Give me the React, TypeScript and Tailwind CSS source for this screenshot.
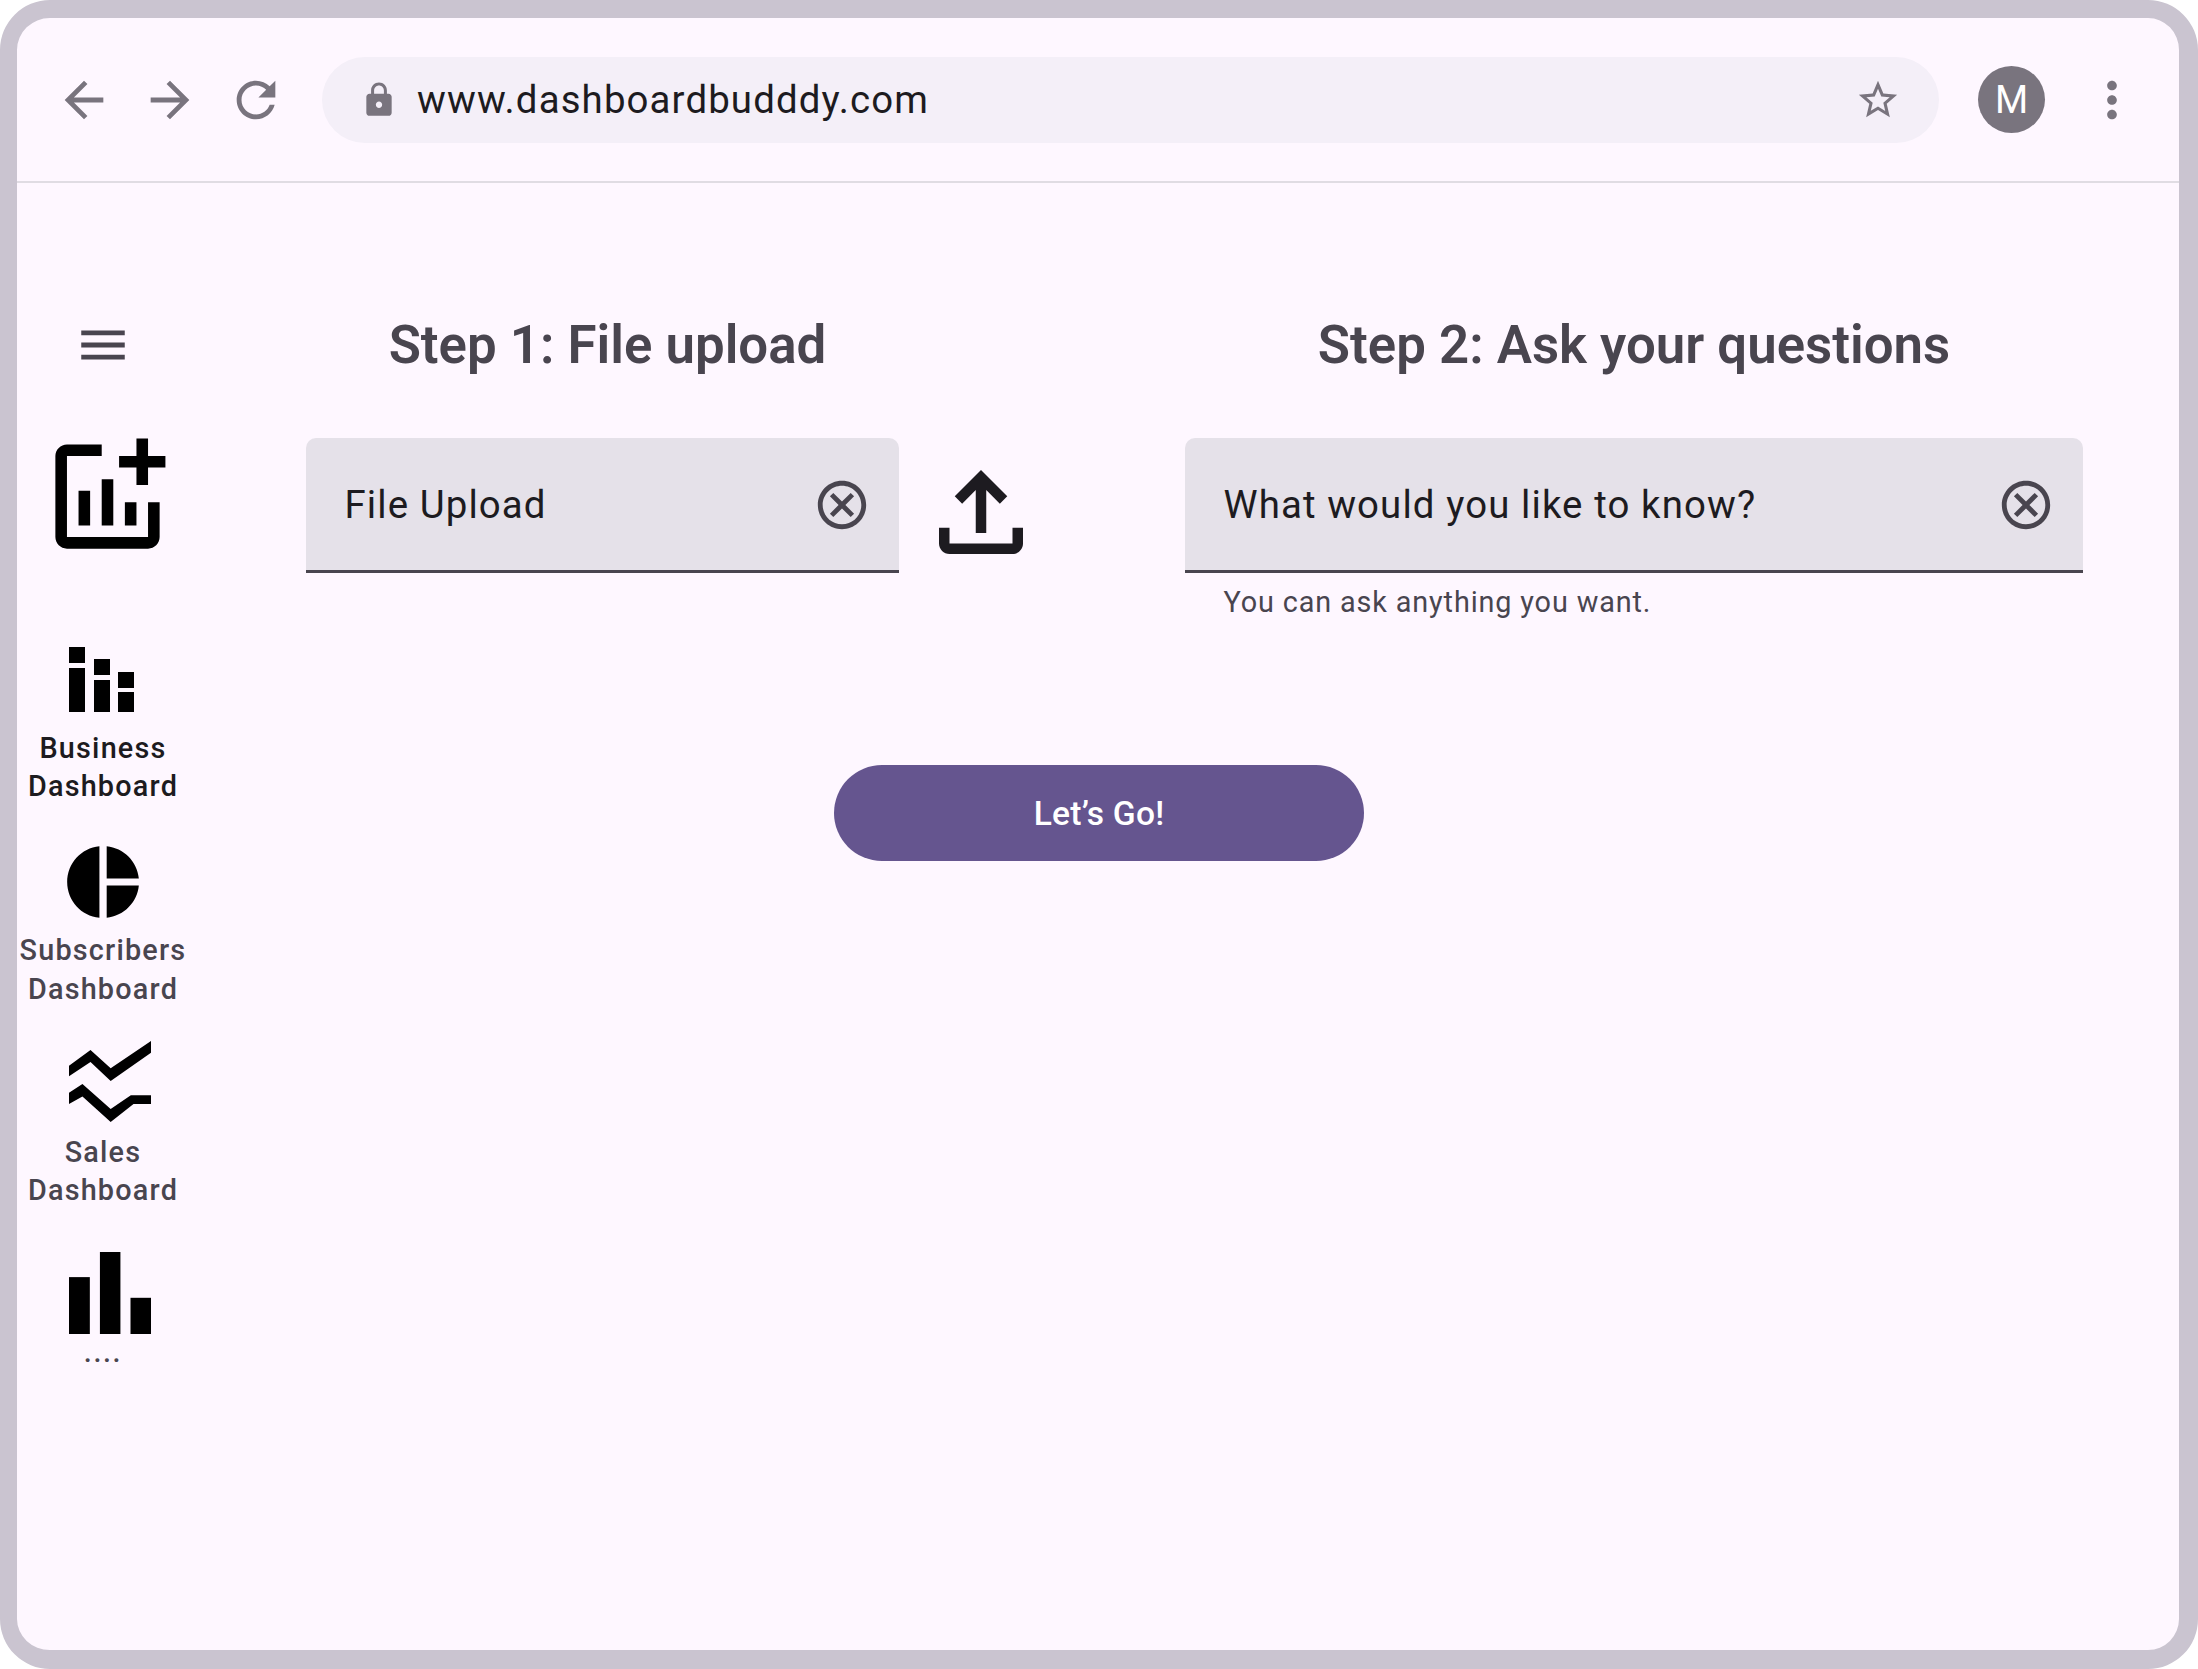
import React from "react";

const Icon = ({ d, size, className = "" }: { d: string; size: number; className?: string }) => (
  <svg viewBox="0 0 24 24" width={size} height={size} className={`shrink-0 fill-current ${className}`}>
    <path d={d} />
  </svg>
);

const P = {
  back: "M20 11H7.83l5.59-5.59L12 4l-8 8 8 8 1.41-1.41L7.83 13H20v-2z",
  forward: "M12 4l-1.41 1.41L16.17 11H4v2h12.17l-5.58 5.59L12 20l8-8z",
  reload: "M17.65 6.35C16.2 4.9 14.21 4 12 4c-4.42 0-7.99 3.58-7.99 8s3.57 8 7.99 8c3.73 0 6.84-2.55 7.73-6h-2.08c-.82 2.33-3.04 4-5.65 4-3.31 0-6-2.69-6-6s2.69-6 6-6c1.66 0 3.14.69 4.22 1.78L13 11h7V4l-2.35 2.35z",
  lock: "M18 8h-1V6c0-2.76-2.24-5-5-5S7 3.24 7 6v2H6c-1.1 0-2 .9-2 2v10c0 1.1.9 2 2 2h12c1.1 0 2-.9 2-2V10c0-1.1-.9-2-2-2zm-6 9c-1.1 0-2-.9-2-2s.9-2 2-2 2 .9 2 2-.9 2-2 2zm3.1-9H8.9V6c0-1.71 1.39-3.1 3.1-3.1 1.71 0 3.1 1.39 3.1 3.1v2z",
  star: "M22 9.24l-7.19-.62L12 2 9.19 8.63 2 9.24l5.46 4.73L5.82 21 12 17.27 18.18 21l-1.63-7.03L22 9.24zM12 15.4l-3.76 2.27 1-4.28-3.32-2.88 4.38-.38L12 6.1l1.71 4.04 4.38.38-3.32 2.88 1 4.28L12 15.4z",
  more: "M12 8c1.1 0 2-.9 2-2s-.9-2-2-2-2 .9-2 2 .9 2 2 2zm0 2c-1.1 0-2 .9-2 2s.9 2 2 2 2-.9 2-2-.9-2-2-2zm0 6c-1.1 0-2 .9-2 2s.9 2 2 2 2-.9 2-2-.9-2-2-2z",
  menu: "M3 18h18v-2H3v2zm0-5h18v-2H3v2zm0-7v2h18V6H3z",
  addChart: "M22 5v2h-3v3h-2V7h-3V5h3V2h2v3h3zm-3 14H5V5h6V3H5c-1.1 0-2 .9-2 2v14c0 1.1.9 2 2 2h14c1.1 0 2-.9 2-2v-6h-2v6zm-4-6v4h2v-4h-2zm-4 4h2V9h-2v8zm-2 0v-6H7v6h2z",
  pie: "M11 2v20c-5.07-.5-9-4.79-9-10s3.93-9.5 9-10zm2.03 0v8.99H22c-.47-4.74-4.24-8.52-8.97-8.99zm0 11.01V22c4.74-.47 8.5-4.25 8.97-8.99h-8.97z",
  cancel: "M12 2C6.47 2 2 6.47 2 12s4.47 10 10 10 10-4.47 10-10S17.53 2 12 2zm0 18c-4.41 0-8-3.59-8-8s3.59-8 8-8 8 3.59 8 8-3.59 8-8 8zm3.59-13L12 10.59 8.41 7 7 8.41 10.59 12 7 15.59 8.41 17 12 13.41 15.59 17 17 15.59 13.41 12 17 8.41z",
  upload: "M18 15v3H6v-3H4v3c0 1.1.9 2 2 2h12c1.1 0 2-.9 2-2v-3h-2zM7 9l1.41 1.41L11 7.83V16h2V7.83l2.59 2.58L17 9l-5-5-5 5z",
};

const Label = ({ children, className = "" }: { children: React.ReactNode; className?: string }) => (
  <div className={`w-full text-center text-[28.8px] leading-[38.2px] font-medium tracking-[1.2px] whitespace-nowrap ${className}`}>
    {children}
  </div>
);

const Field = ({ label, width }: { label: string; width: string }) => (
  <div className={`flex h-[135px] ${width} items-center justify-between rounded-t-[10px] border-b-[3px] border-[#49454f] bg-[#e5e1e9] pr-[28.5px] pl-[38.5px] text-[38.4px] tracking-[1.1px] text-[#1d1b20]`}>
    <span className="pt-[2px]">{label}</span>
    <Icon d={P.cancel} size={58} className="mt-[1px] text-[#49454f]" />
  </div>
);

export default function App() {
  return (
    <div className="h-[1669px] w-full bg-white font-['Roboto',sans-serif]">
      <div className="flex h-full flex-col overflow-hidden rounded-[50px] border-t-[18px] border-r-[19px] border-b-[19px] border-l-[17px] border-[#cac4d0] bg-[#fef7ff]">
        <header className="flex h-[165px] shrink-0 items-center gap-[28px] border-b-2 border-[#e0dce3] pl-[38px] text-[#79747e]">
          <Icon d={P.back} size={58} />
          <Icon d={P.forward} size={58} />
          <Icon d={P.reload} size={58} />
          <div className="ml-[9px] flex h-[86px] w-[1617px] items-center rounded-full bg-[#f4eff8] pr-[38px] pl-[38px]">
            <Icon d={P.lock} size={38} />
            <span className="ml-[19px] flex-1 text-[38.4px] tracking-[1.13px] text-[#1d1b20]">www.dashboardbudddy.com</span>
            <Icon d={P.star} size={46} />
          </div>
          <div className="ml-[11px] flex h-[67px] w-[67px] items-center justify-center rounded-full bg-[#79747e] pt-[2px] text-[38px] text-white">M</div>
          <Icon d={P.more} size={58} className="ml-[10px]" />
        </header>

        <div className="flex flex-1">
          <nav className="flex w-[172px] shrink-0 flex-col text-[#49454f]">
            <Icon d={P.menu} size={58} className="mt-[133px] ml-[57px] text-[#49454f]" />
            <Icon d={P.addChart} size={139} className="mt-[53px] ml-[21px] text-black" />

            <svg viewBox="69 647 65 65" width={65} height={65} className="mt-[81px] ml-[52px] shrink-0 fill-black">
              <rect x="69" y="647" width="16" height="16" />
              <rect x="69" y="668" width="16" height="44" />
              <rect x="94" y="659" width="16" height="16" />
              <rect x="94" y="680" width="16" height="32" />
              <rect x="118" y="672" width="16" height="16" />
              <rect x="118" y="692" width="16" height="20" />
            </svg>
            <Label className="mt-[17px] text-[#1d1b20]">Business<br />Dashboard</Label>

            <Icon d={P.pie} size={86} className="mt-[34px] ml-[43px] text-black" />
            <Label className="mt-[6px]">Subscribers<br />Dashboard</Label>

            <svg viewBox="208 598 244 219" preserveAspectRatio="none" width={82} height={81} className="mt-[33px] ml-[52px] shrink-0 fill-black">
              <polygon points="208,665 272,622 332,672 452,598 452,630 332,706 272,655 208,693" />
              <polygon points="208,738 248,714 332,782 392,745 452,745 452,768 400,768 332,817 248,748 208,768" />
            </svg>
            <Label className="mt-[11px]">Sales<br />Dashboard</Label>

            <svg viewBox="208 1168 244 222" preserveAspectRatio="none" width={82} height={82} className="mt-[43px] ml-[52px] shrink-0 fill-black">
              <rect x="208" y="1236" width="62" height="154" />
              <rect x="300" y="1168" width="61" height="222" />
              <rect x="391" y="1292" width="61" height="98" />
            </svg>
            <Label className="-mt-[1px] tracking-[1.6px]">....</Label>
          </nav>

          <main className="flex-1 pt-[124px] pl-[117px]">
            <div className="flex">
              <section className="w-[879px] shrink-0">
                <h2 className="w-[603px] pt-[1px] text-center text-[52.8px] leading-[75px] font-semibold text-[#49454f]">Step 1: File upload</h2>
                <div className="mt-[55px] flex">
                  <Field label="File Upload" width="w-[593px]" />
                  <Icon d={P.upload} size={126} className="mt-[11px] ml-[19px] text-[#1d1b20]" />
                </div>
              </section>
              <section className="w-[898px] shrink-0">
                <h2 className="pt-[1px] text-center text-[52.8px] leading-[75px] font-semibold text-[#49454f]">Step 2: Ask your questions</h2>
                <div className="mt-[55px]">
                  <Field label="What would you like to know?" width="w-full" />
                </div>
                <p className="mt-[10px] pl-[38.5px] text-[28.8px] leading-[38px] tracking-[0.87px] text-[#49454f]">You can ask anything you want.</p>
              </section>
            </div>
            <button className="mt-[144px] ml-[528px] flex h-[96px] w-[530px] items-center justify-center rounded-full bg-[#65558f] pt-[2px] text-[33.6px] font-medium tracking-[0.24px] text-white">
              Let’s Go!
            </button>
          </main>
        </div>
      </div>
    </div>
  );
}
